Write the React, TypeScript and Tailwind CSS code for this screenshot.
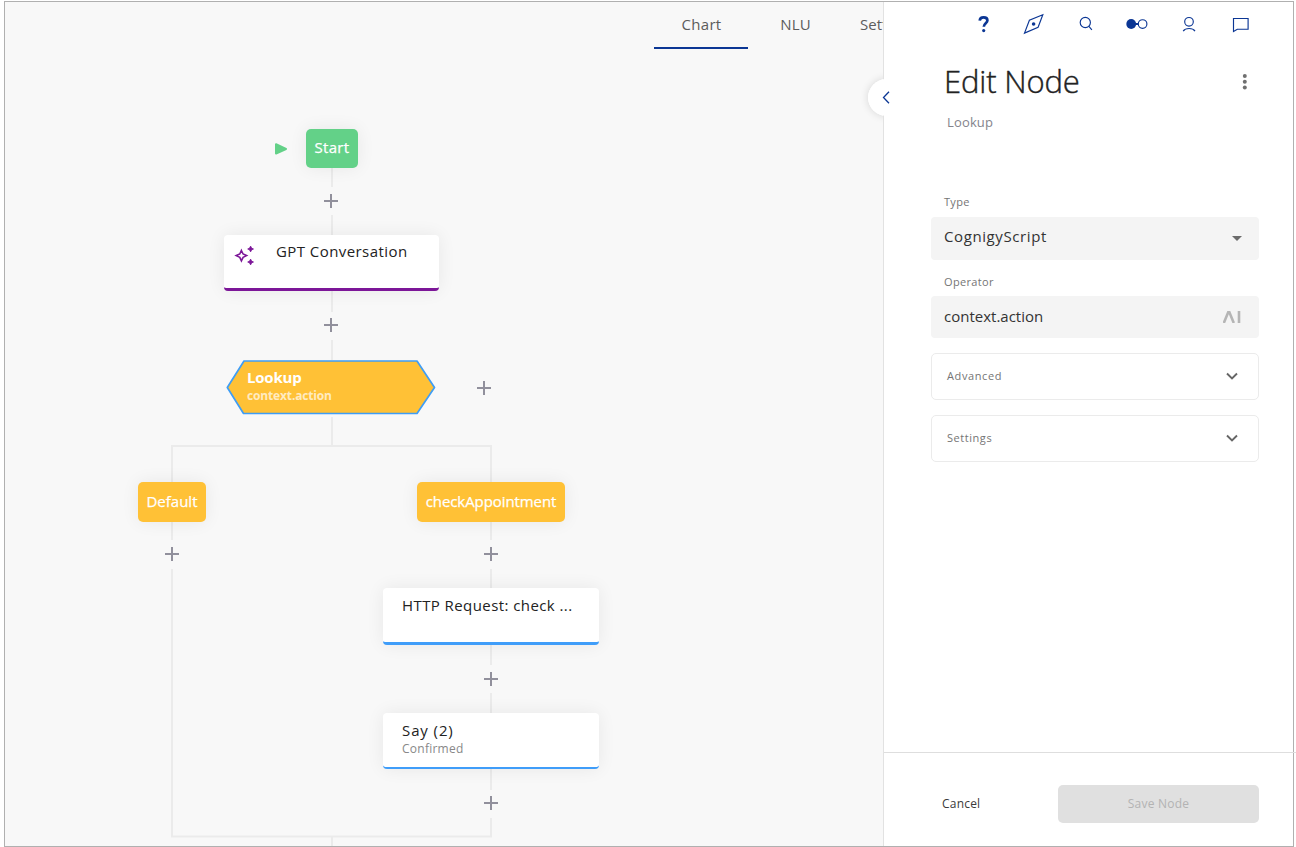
import type { ReactNode } from "react";

function Plus({ className }: { className: string }) {
  return (
    <svg className={`absolute h-[14px] w-[14px] ${className}`} viewBox="0 0 14 14" fill="none" stroke="#91909c" strokeWidth="2">
      <path d="M0 7h14M7 0v14" />
    </svg>
  );
}

function HeaderIcon({ box, children }: { box: string; children: ReactNode }) {
  return (
    <svg className="h-6 w-6 text-[#0b3694]" viewBox={box} fill="none" stroke="currentColor" strokeWidth="1.15">
      {children}
    </svg>
  );
}

function Connectors() {
  return (
    <svg className="absolute top-0 left-0 h-[845px] w-[878px]" viewBox="5 2 878 845" fill="none" stroke="#ebebeb" strokeWidth="2">
      <path d="M332 168v19M332 215v20M332 291v21M332 340v20M332 417v29" />
      <path d="M172 482v-36h319v36M172 522v18M172 569v267.5h319V818" />
      <path d="M491 522v18M491 569v19M491 645v20M491 693v20M491 769v21M332 836v11" />
    </svg>
  );
}

const shadow = "shadow-[0_0_18px_rgba(0,0,0,0.07)]";
const medium = "font-medium [-webkit-text-stroke:0.25px_white]";

function FlowChart() {
  return (
    <div className="absolute inset-0">
      <Connectors />
      <svg className="absolute top-[141px] left-[269px] h-3 w-[13px]" viewBox="0 0 13 12" fill="#63d188" stroke="#63d188" strokeWidth="2" strokeLinejoin="round">
        <path d="M2 1.2v9.4L12 6z" />
      </svg>
      <div className={`absolute top-[127px] left-[301px] flex h-[39px] w-[52px] justify-center rounded-[5px] bg-[#63d188] pt-[8px] text-[15px] leading-5 tracking-[0.3px] text-white ${medium} ${shadow}`}>Start</div>
      <Plus className="top-[192px] left-[319px]" />

      <div className={`absolute top-[233px] left-[219px] flex h-[56px] w-[215px] rounded-[4px] border-b-[3px] border-[#7c1698] bg-white ${shadow}`}>
        <svg className="mt-[9px] ml-[10px] h-6 w-6 shrink-0" viewBox="234 244 24 24" fill="#7c1698">
          <path d="M241.4 250.5l1.7 3.5 3.5 1.6-3.5 1.7-1.7 3.5-1.6-3.5-3.6-1.7 3.6-1.6z" fill="none" stroke="#7c1698" strokeWidth="1.6" />
          <path d="M250.6 246.1l.95 1.95 1.95.95-1.95.95-.95 1.95-.95-1.95-1.95-.95 1.95-.95zM250.6 259.1l.95 1.95 1.95.95-1.95.95-.95 1.95-.95-1.95-1.95-.95 1.95-.95z" stroke="#7c1698" strokeWidth=".8" />
        </svg>
        <div className="mt-[6px] ml-[18px] text-[15px] leading-5 tracking-[0.43px] text-[#222]">GPT Conversation</div>
      </div>
      <Plus className="top-[316px] left-[319px]" />

      <div className="absolute top-[358px] left-[219px] h-[56px] w-[215px]">
        <svg className="absolute top-0 left-0 h-[56px] w-[215px]" viewBox="224 360 215 56">
          <path d="M244 361h173l17.5 26.5L417 413.5H243.5L227.3 387.5z" fill="#ffc136" stroke="#3f9df5" strokeWidth="1.7" strokeLinejoin="round" />
        </svg>
        <div className="relative pt-[7px] pl-[23px] text-white">
          <div className="text-[15px] leading-5 font-bold tracking-[-0.2px]">Lookup</div>
          <div className="mt-px text-[12px] leading-4 font-bold tracking-[-0.15px] text-white/70">context.action</div>
        </div>
      </div>
      <Plus className="top-[379px] left-[472px]" />

      <div className={`absolute top-[480px] left-[133px] flex h-10 w-[68px] justify-center rounded-[5px] bg-[#ffc136] pt-[9px] text-[15px] leading-5 text-white ${medium} ${shadow}`}>Default</div>
      <Plus className="top-[545px] left-[160px]" />
      <div className={`absolute top-[480px] left-[412px] flex h-10 w-[148px] justify-center rounded-[5px] bg-[#ffc136] pt-[9px] text-[15px] leading-5 tracking-[-0.08px] text-white ${medium} ${shadow}`}>checkAppointment</div>
      <Plus className="top-[545px] left-[479px]" />

      <div className={`absolute top-[586px] left-[378px] h-[57px] w-[216px] rounded-[4px] border-b-[3px] border-[#3f9df9] bg-white pt-[7px] pl-[19px] ${shadow}`}>
        <div className="text-[15px] leading-5 tracking-[0.42px] text-[#222]">HTTP Request: check ...</div>
      </div>
      <Plus className="top-[670px] left-[479px]" />

      <div className={`absolute top-[711px] left-[378px] h-[56px] w-[216px] rounded-[4px] border-b-2 border-[#3f9df9] bg-white pt-[7px] pl-[19px] ${shadow}`}>
        <div className="text-[15px] leading-5 tracking-[0.9px] text-[#222]">Say (2)</div>
        <div className="mt-px text-[12px] leading-4 tracking-[0.25px] text-[#888]">Confirmed</div>
      </div>
      <Plus className="top-[794px] left-[479px]" />
    </div>
  );
}

function Tabs() {
  return (
    <nav className="relative flex h-[47px] pl-[649px] text-[15px] leading-5 text-[#5c5c5c]">
      <div className="flex w-[94px] shrink-0 justify-center border-b-2 border-[#0b3694] pt-[12px] pl-px tracking-[0.3px]">Chart</div>
      <div className="flex w-[94px] shrink-0 justify-center pt-[12px] pl-px tracking-[0.2px]">NLU</div>
      <div className="shrink-0 pt-[12px] pl-[18px] tracking-[0.1px]">Settings</div>
    </nav>
  );
}

function Chevron() {
  return (
    <svg className="-mt-px h-3 w-3" viewBox="0 0 12 12" fill="none" stroke="#666" strokeWidth="1.9">
      <path d="M1 3.5l5 5 5-5" />
    </svg>
  );
}

function EditPanel() {
  return (
    <aside className="relative flex h-full w-[410px] shrink-0 flex-col border-l border-[#e2e2e2] bg-white">
      <div className="ml-[88px] flex h-[44px] w-[281px] items-center justify-between">
        <HeaderIcon box="972 12 24 24">
          <path d="M979.7 20.6c.2-2 1.7-3.2 3.9-3.2 2.3 0 3.8 1.2 3.8 3.1 0 2.7-3.6 2.9-3.6 6.3" strokeWidth="2.7" />
          <circle cx="983.7" cy="30.6" r="1.6" fill="currentColor" stroke="none" />
        </HeaderIcon>
        <HeaderIcon box="1023.4 12 24 24">
          <path d="M1043.2 14.8L1038.5 27.3 1024.9 33.1 1029.8 20.2z" />
          <circle cx="1034" cy="24" r="1.8" fill="currentColor" stroke="none" />
        </HeaderIcon>
        <HeaderIcon box="1075 12 24 24">
          <circle cx="1085.3" cy="22.5" r="5.1" />
          <path d="M1088.9 26.4l3 3.4" />
        </HeaderIcon>
        <HeaderIcon box="1126.2 12 24 24">
          <circle cx="1131.4" cy="24" r="4.9" fill="currentColor" stroke="none" />
          <circle cx="1142.8" cy="24" r="4.3" />
          <path d="M1135 24h3.5" strokeWidth="2" />
        </HeaderIcon>
        <HeaderIcon box="1178 12 24 24">
          <circle cx="1189" cy="21.8" r="4.3" />
          <path d="M1183.2 31.1c1.2-1.8 3.4-2.6 5.9-2.6s4.7.8 5.9 2.6" />
        </HeaderIcon>
        <HeaderIcon box="1229 12 24 24">
          <path d="M1233.5 18.5h14.6v10.7h-10.8l-3.8 2.2z" />
        </HeaderIcon>
      </div>

      <div className="mt-[15px] flex h-[40px] items-center pr-[44px] pl-[60px]">
        <h1 className="flex-1 text-[31px] leading-10 font-light tracking-[-0.15px] text-[#222] [-webkit-text-stroke:0.4px_#222]">Edit Node</h1>
        <svg className="mt-[2px] h-4 w-[9px]" viewBox="0 0 9 16" fill="#707070">
          <circle cx="4.8" cy="2" r="2" />
          <circle cx="4.8" cy="7.8" r="2" />
          <circle cx="4.8" cy="13.6" r="2" />
        </svg>
      </div>
      <div className="mt-[11px] pl-[63px] text-[13px] leading-5 tracking-[0.15px] text-[#84848c]">Lookup</div>

      <div className="mt-[62px] flex flex-1 flex-col pr-[34px] pl-[47px]">
        <div className="pl-[13px] text-[11px] leading-4 tracking-[0.3px] text-[#757575]">Type</div>
        <div className="mt-[7px] flex h-[43px] items-start justify-between rounded-[4px] bg-[#f4f4f4] pt-[9px] pr-[17px] pl-[13px] text-[15px] leading-5 text-[#333]">
          <span className="tracking-[0.6px]">CognigyScript</span>
          <svg className="mt-[10px] h-[5px] w-[10px]" viewBox="0 0 10 5" fill="#6b6b6b">
            <path d="M0 0h10L5 5z" />
          </svg>
        </div>
        <div className="mt-[14px] pl-[13px] text-[11px] leading-4 tracking-[0.35px] text-[#757575]">Operator</div>
        <div className="mt-[6px] flex h-[42px] items-center justify-between rounded-[4px] bg-[#f4f4f4] pr-[18px] pl-[13px] text-[15px] leading-5 text-[#333]">
          <span className="pb-[2px]">context.action</span>
          <svg className="h-3 w-[18px]" viewBox="0.5 0 18 12" fill="none" stroke="#b5b5b5" strokeWidth="2.6">
            <path d="M1.3 12L5.7 1.3h1.2L11.3 12M16.5 0v12" />
          </svg>
        </div>
        <div className="mt-[15px] flex h-[47px] items-center justify-between rounded-[5px] border border-[#ebebeb] pr-5 pl-[15px] text-[11px] tracking-[0.6px] text-[#757575]">
          Advanced
          <Chevron />
        </div>
        <div className="mt-[15px] flex h-[47px] items-center justify-between rounded-[5px] border border-[#ebebeb] pr-5 pl-[15px] text-[11px] tracking-[0.55px] text-[#757575]">
          Settings
          <Chevron />
        </div>
      </div>

      <footer className="mr-[-3px] flex h-[94px] items-center justify-between border-t border-[#dedede] pt-[9px] pr-[37px] pl-[58px] text-[12px]">
        <button className="tracking-[0.2px] text-[#3a3a3a]">Cancel</button>
        <button className="h-[38px] w-[201px] rounded-[5px] bg-[#e0e0e0] tracking-[0.25px] text-[#b3b3b3]">Save Node</button>
      </footer>
    </aside>
  );
}

export default function App() {
  return (
    <div className="h-[847px] w-[1296px] overflow-hidden bg-white pt-px pl-1 font-['Open_Sans',sans-serif]">
      <div className="relative flex h-[846px] w-[1290px] border border-[#b0b0b0]">
        <main className="relative h-full w-[878px] shrink-0 overflow-hidden bg-[#f8f8f8]">
          <FlowChart />
          <Tabs />
          <div className="absolute top-[77px] left-[863px] h-[37px] w-[37px] rounded-full bg-white shadow-[0_0_8px_rgba(0,0,0,0.14)]" />
        </main>
        <EditPanel />
        <button className="absolute top-[77px] left-[863px] flex h-[37px] w-[37px] items-center justify-center rounded-full bg-white pr-[2px]" aria-label="Collapse">
          <svg className="h-[13px] w-2" viewBox="0 0 8 13" fill="none" stroke="#0b3694" strokeWidth="1.3">
            <path d="M7 .8L1.5 6.5 7 12.2" />
          </svg>
        </button>
      </div>
    </div>
  );
}
